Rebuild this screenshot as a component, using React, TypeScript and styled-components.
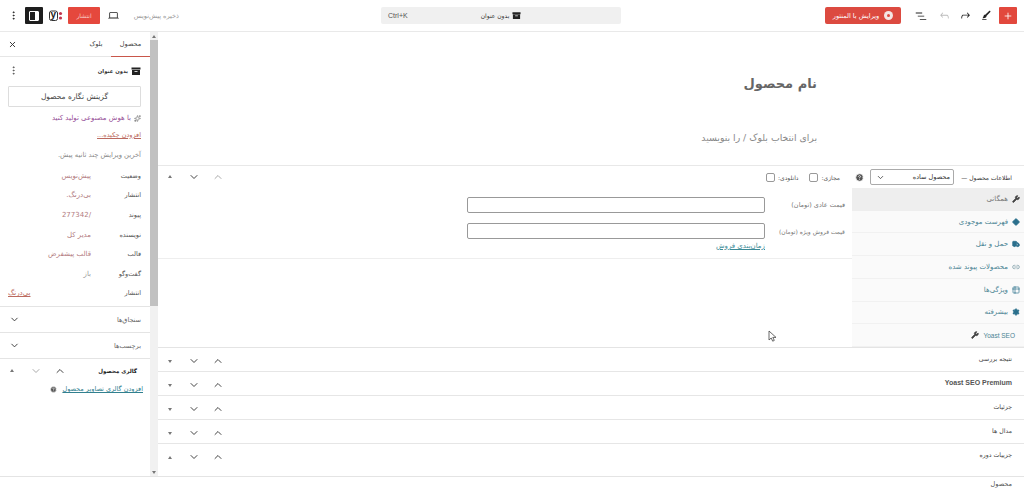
import React from 'react';
import styled, { createGlobalStyle } from 'styled-components';
import { ChevronUp, ChevronDown, X, Plus, MoreVertical, Sparkles, Wrench, Diamond, Truck, Link2, Table2, Settings, HelpCircle } from 'lucide-react';

const Global = createGlobalStyle`
  html, body { margin: 0; padding: 0; background: #fff; }
  * { box-sizing: border-box; }
  body { font-family: "DejaVu Sans", "Noto Sans", sans-serif; }
`;

const Page = styled.div`
  direction: rtl; width: 1024px; height: 490px; overflow: hidden;
  display: flex; flex-direction: column; color: #444; font-size: 7px; position: relative;
`;
const Header = styled.header`
  height: 32px; flex: none; display: grid; grid-template-columns: 403px 240px 1fr;
  align-items: center; border-bottom: 1px solid #e9e9e9;
`;
const HeadGroup = styled.div`
  display: flex; align-items: center; height: 17px;
`;
const RightTools = styled(HeadGroup)`padding-right: 7px;`;
const LeftTools = styled(HeadGroup)`padding-right: 202px;`;
const AddBtn = styled.div`
  width: 18px; height: 17px; background: #e2483d; color: #fff; border-radius: 1px; flex: none;
  display: flex; align-items: center; justify-content: center;
`;
const ToolIcon = styled.div<{ $w: number; $faded?: boolean }>`
  width: ${p => p.$w}px; flex: none; height: 17px; display: flex; align-items: center; justify-content: center;
  color: ${p => (p.$faded ? '#bbb' : '#222')};
`;
const EditBtn = styled.div`
  width: 76px; height: 17px; margin-right: 10px; background: #dc4a40; color: #fff; border-radius: 2px; flex: none;
  display: flex; align-items: center; justify-content: center; gap: 5px; font-size: 6.5px; white-space: nowrap;
`;
const Elementor = styled.span`
  width: 9px; height: 9px; border-radius: 50%; background: #f4e6e4; flex: none;
  display: flex; align-items: center; justify-content: center;
  &::after { content: ''; width: 3px; height: 3px; background: #dc4a40; border-radius: 50%; }
`;
const Command = styled.div`
  height: 17px; background: #f0f0f0; border-radius: 2px; display: flex; align-items: center;
  justify-content: center; gap: 3px; position: relative; font-size: 6px; color: #333;
`;
const Shortcut = styled.span`
  position: absolute; left: 7px; direction: ltr; color: #555; font-family: "Liberation Sans", sans-serif; font-size: 7px;
`;
const Saved = styled.span`color: #999; font-size: 6.5px; width: 52px; flex: none; white-space: nowrap;`;
const Publish = styled.div`
  width: 32px; height: 17px; background: #e5483d; color: #f8c9c3; border-radius: 1px; font-size: 6px; flex: none;
  display: flex; align-items: center; justify-content: center;
`;
const Toggle = styled.div`
  width: 18px; height: 17px; background: #1e1e1e; color: #fff; border-radius: 1px; flex: none;
  display: flex; align-items: center; justify-content: center;
`;
const ToggleGlyph = styled.span`
  width: 10px; height: 10px; border: 1px solid #fff; border-radius: 1px; display: block; position: relative;
  &::after { content: ''; position: absolute; right: 0; top: 0; bottom: 0; width: 3px; background: #fff; }
`;
const Body = styled.div`flex: 1; min-height: 0; display: flex;`;
const Main = styled.main`width: 866px; flex: none; display: flex; flex-direction: column;`;
const Canvas = styled.div`height: 133px; flex: none; display: flex; flex-direction: column; align-items: center;`;
const Title = styled.h1`
  width: 452px; margin: 39px 0 0; font-size: 13px; line-height: 26px; font-weight: 700; color: #666;
`;
const Placeholder = styled.div`
  width: 452px; margin-top: 34px; font-size: 9.3px; line-height: 14px; color: #888;
`;
const ProductHead = styled.div`
  height: 23px; flex: none; border-top: 1px solid #e8e8e8; display: flex; align-items: center; padding-right: 12px;
`;
const ProductTitle = styled.span`font-size: 6px; color: #333; width: 51px; flex: none; white-space: nowrap;`;
const SelectBox = styled.div`
  width: 84px; height: 16px; margin-right: 7px; border: 1px solid #aaa; border-radius: 2px; padding: 0 3px 0 5px; flex: none;
  display: flex; align-items: center; justify-content: space-between; font-size: 6.5px; color: #333;
`;
const Help = styled.span`
  margin-right: 6px; display: flex; color: #555;
`;
const CheckLabel = styled.label<{ $gap: number }>`
  display: flex; align-items: center; gap: 3px; margin-right: ${p => p.$gap}px; color: #555; font-size: 6px; white-space: nowrap;
`;
const Check = styled.input`
  appearance: none; width: 9px; height: 9px; margin: 0; border: 1px solid #999; border-radius: 2px; background: #fff;
`;
const Moves = styled.div`margin-right: auto; display: flex; color: #444;`;
const Move = styled.span<{ $faded?: boolean }>`
  width: 24px; height: 14px; display: flex; align-items: center; justify-content: center;
  color: ${p => (p.$faded ? '#aaa' : '#444')};
`;
const Tri = styled.span<{ $down?: boolean }>`
  width: 0; height: 0; border-left: 2.5px solid transparent; border-right: 2.5px solid transparent;
  ${p => (p.$down ? 'border-top: 3px solid #777;' : 'border-bottom: 3px solid #777;')}
`;
const ProductBody = styled.div`height: 160px; flex: none; display: flex; border-bottom: 1px solid #e4e4e4;`;
const Tabs = styled.div`width: 172px; flex: none; display: flex; flex-direction: column; background: #fafafa;`;
const Tab = styled.div<{ $active?: boolean }>`
  flex: 1; display: flex; align-items: center; gap: 4px; padding-right: 4px; font-size: 7px;
  background: ${p => (p.$active ? '#eee' : 'transparent')};
  color: ${p => (p.$active ? '#777' : '#4a8494')};
  border-bottom: 1px solid ${p => (p.$active ? '#eee' : '#f1f1f1')};
`;
const YoastTab = styled(Tab)`
  color: #4a8494; font-family: "Liberation Sans", sans-serif; font-size: 6.5px; padding-right: 9px;
`;
const TabIcon = styled.span<{ $c?: string }>`display: flex; color: ${p => p.$c || '#2b6f8c'};`;
const Fields = styled.div`flex: 1; display: flex; flex-direction: column;`;
const FieldBlock = styled.div`
  height: 71px; padding: 9px 7px 0 0; display: flex; flex-direction: column; gap: 10px; border-bottom: 1px solid #eee;
`;
const FieldRow = styled.div`display: flex; align-items: center;`;
const FieldLabel = styled.label<{ $small?: boolean }>`
  width: 80px; flex: none; color: #777; font-size: ${p => (p.$small ? 6 : 6.5)}px; white-space: nowrap;
`;
const FieldInput = styled.input`
  width: 298px; height: 16px; border: 1px solid #999; border-radius: 2px; background: #fff; margin: 0; padding: 0;
`;
const Schedule = styled.a`
  margin: -7px 80px 0 0; color: #3b8a96; text-decoration: underline; font-size: 7px;
`;
const Row = styled.div<{ $h?: number }>`
  height: ${p => p.$h || 24}px; flex: none; display: flex; align-items: flex-start; padding: 7px 12px 0 0;
  border-bottom: 1px solid #e6e6e6; color: #444; font-size: 6.2px;
`;
const RowLatin = styled.span`font-family: "Liberation Sans", sans-serif; font-weight: 700; font-size: 7px; color: #555;`;
const RowMoves = styled(Moves)`margin-top: -1px;`;
const Divider = styled.div`flex: none; width: 8px; background: #f1f1f1; display: flex; flex-direction: column; align-items: center;`;
const ScrollEnd = styled.span`height: 8px; flex: none; display: flex; align-items: center;`;
const Thumb = styled.div`width: 8px; height: 266px; background: #c1c1c1; flex: none;`;
const Spacer = styled.div`flex: 1;`;
const Side = styled.aside`width: 150px; flex: none; display: flex; flex-direction: column; font-size: 7px; color: #555;`;
const SideTabs = styled.div`
  height: 25px; flex: none; display: flex; align-items: center; border-bottom: 1px solid #e6e6e6; padding-left: 8px;
`;
const SideTab = styled.div<{ $active?: boolean }>`
  height: 25px; width: ${p => (p.$active ? 39 : 30)}px; display: flex; align-items: center; justify-content: center;
  color: #444; border-bottom: 1px solid ${p => (p.$active ? '#c9564a' : 'transparent')}; margin-bottom: -1px; font-size: 6.5px;
`;
const CloseBtn = styled.span`margin-right: auto; display: flex; color: #333;`;
const PostHead = styled.div`
  height: 29px; flex: none; display: flex; align-items: center; gap: 3px; padding: 0 9px 2px 8px; color: #333; font-size: 5.3px; font-weight: 700;
`;
const DotsEnd = styled.span`margin-right: auto; display: flex; color: #555;`;
const Featured = styled.div`
  height: 21px; flex: none; margin: 0 9px 0 8px; border: 1px solid #ddd; border-radius: 1px;
  display: flex; align-items: center; justify-content: center; color: #444; font-size: 7.5px;
`;
const AiLink = styled.div`
  margin: 4px 9px 0 0; height: 14px; display: flex; align-items: center; gap: 3px; color: #964f97; font-size: 7px;
`;
const AddLink = styled.a`
  margin: 3px 9px 0 0; line-height: 14px; color: #bb6a60; text-decoration: underline; font-size: 6.5px;
`;
const Edited = styled.div`margin: 6px 9px 0 0; line-height: 14px; color: #888; font-size: 6.8px;`;
const Meta = styled.div`
  margin-top: 4px; display: grid; grid-auto-rows: 19.6px; padding: 0 9px 3px 8px;
`;
const MetaRow = styled.div`display: grid; grid-template-columns: 50px 1fr; align-items: center;`;
const MetaLabel = styled.span`color: #555; font-size: 6.5px;`;
const MetaValue = styled.span`color: #b27b80; font-size: 7px; white-space: nowrap;`;
const MetaPlain = styled(MetaValue)`color: #999;`;
const MetaLink = styled.a`
  color: #bb6a60; text-decoration: underline; font-size: 7px; text-align: left; white-space: nowrap;
`;
const SideSection = styled.div`
  height: 26px; flex: none; border-top: 1px solid #e4e4e4; display: flex; align-items: center;
  justify-content: space-between; padding: 0 9px 0 9px; color: #666; font-size: 6.5px;
`;
const Gallery = styled.div`border-top: 1px solid #e4e4e4; flex: none;`;
const GalleryHead = styled.div`
  height: 23px; display: flex; align-items: center; padding-right: 13px; color: #222; font-size: 5.5px; font-weight: 700;
`;
const GalleryLink = styled.div`
  display: flex; align-items: center; gap: 5px; padding-right: 7px; font-size: 6.5px; margin-top: 3px;
`;
const TealLink = styled.a`color: #31808f; text-decoration: underline;`;
const Footer = styled.footer`
  height: 14px; flex: none; border-top: 1px solid #e4e4e4; padding-right: 12px;
  display: flex; align-items: center; color: #555; font-size: 6.5px;
`;
const Pointer = styled.svg`position: absolute; left: 768px; top: 330px;`;

const Undo = ({ size = 13 }: { size?: number }) => (
  <svg width={size} height={size} viewBox="0 0 24 24" fill="currentColor"><path d="M18.3 11.7c-.6-.6-1.4-.9-2.3-.9H6.7l2.9-3.3-1.1-1-4.5 5L8.5 16l1-1-2.7-2.7H16c.5 0 .9.2 1.3.5 1 1 1 3.4 1 4.5v.3h1.5v-.2c0-1.5 0-4.3-1.5-5.7z" /></svg>
);
const Redo = () => (
  <svg width={13} height={13} viewBox="0 0 24 24" fill="currentColor"><path d="M15.6 6.5l-1.1 1 2.9 3.3H8c-.9 0-1.7.3-2.3.9-1.4 1.5-1.4 4.2-1.4 5.6v.2h1.5v-.3c0-1.1 0-3.5 1-4.5.3-.3.7-.5 1.3-.5h9.2L14.5 15l1.1 1.1 4.6-4.6-4.6-5z" /></svg>
);
const ListView = () => (
  <svg width={14} height={14} viewBox="0 0 24 24" fill="currentColor"><path d="M3 6h11v1.5H3V6zm3.5 5.5h11V13h-11v-1.5zM21 17H10v1.5h11V17z" /></svg>
);
const Brush = () => (
  <svg width={13} height={13} viewBox="0 0 24 24" fill="currentColor"><path d="M4 20h8v-1.5H4V20zM18.9 3.5c-.6-.6-1.5-.6-2.1 0l-7.2 7.2c-.4-.1-.7 0-1.1.1-.5.2-1.5.7-1.9 2.2-.4 1.7-.8 2.2-1.1 2.7-.1.1-.2.3-.3.4l-.6 1.1H6c2 0 3.4-.4 4.7-1.4.8-.6 1.2-1.4 1.3-2.3 0-.3 0-.5-.1-.7L19 5.7c.5-.6.5-1.6-.1-2.2z" /></svg>
);
const Laptop = () => (
  <svg width={13} height={13} viewBox="0 0 24 24" fill="currentColor"><path d="M20.5 16h-.7V8c0-1.1-.9-2-2-2H6.2c-1.1 0-2 .9-2 2v8h-.7c-.8 0-1.5.7-1.5 1.5h20c0-.8-.7-1.5-1.5-1.5zM5.7 8c0-.3.2-.5.5-.5h11.6c.3 0 .5.2.5.5v7.6H5.7V8z" /></svg>
);
const ArchiveIcon = ({ size = 10 }: { size?: number }) => (
  <svg width={size} height={size} viewBox="0 0 20 20" fill="#222"><path d="M1 3h18v4H1zM2 8h16v10H2z" /><path d="M7 10h6v1.6H7z" fill="#fff" /></svg>
);
const YoastLogo = () => (
  <svg width={14} height={12} viewBox="0 0 14 12" direction="ltr">
    <rect x="0.5" y="1" width="8" height="9.5" rx="2" fill="none" stroke="#333" strokeWidth="1" />
    <text x="1.4" y="8.4" fontSize="10" fontWeight="700" fontFamily="Liberation Sans" fill="#222" direction="ltr">y</text>
    <circle cx="11.5" cy="3.5" r="1.6" fill="#c2334d" />
    <circle cx="11.5" cy="8" r="1.6" fill="#c2334d" />
  </svg>
);

const MoveSet = ({ down, fadeUp, fadeDown }: { down?: boolean; fadeUp?: boolean; fadeDown?: boolean }) => (
  <>
    <Move $faded={fadeUp}><ChevronUp size={12} strokeWidth={2} /></Move>
    <Move $faded={fadeDown}><ChevronDown size={12} strokeWidth={2} /></Move>
    <Move><Tri $down={down} /></Move>
  </>
);

const metaRows = [
  ['وضعیت', 'پیش‌نویس'],
  ['انتشار', 'بی‌درنگ.'],
  ['پیوند', '/277342'],
  ['نویسنده', 'مدیر کل'],
  ['قالب', 'قالب پیشفرض'],
];

const rows = ['نتیجه بررسی', 'Yoast SEO Premium', 'جزئیات', 'مدال ها'];

export default function App() {
  return (
    <Page>
      <Global />
      <Header>
        <RightTools>
          <AddBtn><Plus size={10} strokeWidth={2} /></AddBtn>
          <ToolIcon $w={26}><Brush /></ToolIcon>
          <ToolIcon $w={16}><Redo /></ToolIcon>
          <ToolIcon $w={26} $faded><Undo /></ToolIcon>
          <ToolIcon $w={20}><ListView /></ToolIcon>
          <EditBtn><Elementor />ویرایش با المنتور</EditBtn>
        </RightTools>
        <Command>
          <ArchiveIcon size={9} />
          <span>بدون عنوان</span>
          <Shortcut>Ctrl+K</Shortcut>
        </Command>
        <LeftTools>
          <Saved>ذخیره پیش‌نویس</Saved>
          <ToolIcon $w={27}><Laptop /></ToolIcon>
          <Publish>انتشار</Publish>
          <ToolIcon $w={25}><YoastLogo /></ToolIcon>
          <Toggle><ToggleGlyph /></Toggle>
          <ToolIcon $w={24}><MoreVertical size={11} /></ToolIcon>
        </LeftTools>
      </Header>
      <Body>
        <Main>
          <Canvas>
            <Title>نام محصول</Title>
            <Placeholder>برای انتخاب بلوک / را بنویسید</Placeholder>
          </Canvas>
          <ProductHead>
            <ProductTitle>اطلاعات محصول —</ProductTitle>
            <SelectBox><span>محصول ساده</span><ChevronDown size={9} /></SelectBox>
            <Help><HelpCircle size={9} fill="#555" stroke="#fff" /></Help>
            <CheckLabel $gap={15}>مجازی:<Check type="checkbox" /></CheckLabel>
            <CheckLabel $gap={11}>دانلودی:<Check type="checkbox" /></CheckLabel>
            <RowMoves><MoveSet fadeUp /></RowMoves>
          </ProductHead>
          <ProductBody>
            <Tabs>
              <Tab $active><TabIcon $c="#444"><Wrench size={8} fill="currentColor" /></TabIcon>همگانی</Tab>
              <Tab><TabIcon><Diamond size={8} fill="currentColor" /></TabIcon>فهرست موجودی</Tab>
              <Tab><TabIcon><Truck size={8} fill="currentColor" /></TabIcon>حمل و نقل</Tab>
              <Tab><TabIcon $c="#6b8f9b"><Link2 size={8} /></TabIcon>محصولات پیوند شده</Tab>
              <Tab><TabIcon><Table2 size={8} /></TabIcon>ویژگی‌ها</Tab>
              <Tab><TabIcon><Settings size={8} fill="currentColor" /></TabIcon>بیشرفته</Tab>
              <YoastTab>Yoast SEO<TabIcon $c="#444"><Wrench size={8} fill="currentColor" /></TabIcon></YoastTab>
            </Tabs>
            <Fields>
              <FieldBlock>
                <FieldRow><FieldLabel>قیمت عادی (تومان)</FieldLabel><FieldInput /></FieldRow>
                <FieldRow><FieldLabel $small>قیمت فروش ویژه (تومان)</FieldLabel><FieldInput /></FieldRow>
                <Schedule>زمان‌بندی فروش</Schedule>
              </FieldBlock>
            </Fields>
          </ProductBody>
          {rows.map(r => (
            <Row key={r}>
              {r.startsWith('Yoast') ? <RowLatin>{r}</RowLatin> : <span>{r}</span>}
              <RowMoves><MoveSet down /></RowMoves>
            </Row>
          ))}
          <Row $h={33}>
            <span>جزییات دوره</span>
            <RowMoves><MoveSet /></RowMoves>
          </Row>
        </Main>
        <Divider>
          <ScrollEnd><Tri /></ScrollEnd>
          <Thumb />
          <Spacer />
          <ScrollEnd><Tri $down /></ScrollEnd>
        </Divider>
        <Side>
          <SideTabs>
            <SideTab $active>محصول</SideTab>
            <SideTab>بلوک</SideTab>
            <CloseBtn><X size={9} strokeWidth={2.5} /></CloseBtn>
          </SideTabs>
          <PostHead>
            <ArchiveIcon />
            <span>بدون عنوان</span>
            <DotsEnd><MoreVertical size={11} /></DotsEnd>
          </PostHead>
          <Featured>گزینش نگاره محصول</Featured>
          <AiLink><Sparkles size={7} color="#666" />با هوش مصنوعی تولید کنید</AiLink>
          <AddLink>افزودن چکیده...</AddLink>
          <Edited>آخرین ویرایش چند ثانیه پیش.</Edited>
          <Meta>
            {metaRows.map(([k, v]) => (
              <MetaRow key={k}><MetaLabel>{k}</MetaLabel><MetaValue>{v}</MetaValue></MetaRow>
            ))}
            <MetaRow><MetaLabel>گفت‌وگو</MetaLabel><MetaPlain>باز</MetaPlain></MetaRow>
            <MetaRow><MetaLabel>انتشار</MetaLabel><MetaLink>بی‌درنگ</MetaLink></MetaRow>
          </Meta>
          <SideSection><span>سنجاق‌ها</span><ChevronDown size={11} color="#333" /></SideSection>
          <SideSection><span>برچسب‌ها</span><ChevronDown size={11} color="#333" /></SideSection>
          <Gallery>
            <GalleryHead>
              <span>گالری محصول</span>
              <Moves><MoveSet fadeDown /></Moves>
            </GalleryHead>
            <GalleryLink>
              <TealLink>افزودن گالری تصاویر محصول</TealLink>
              <HelpCircle size={7} fill="#555" stroke="#fff" />
            </GalleryLink>
          </Gallery>
        </Side>
      </Body>
      <Footer>محصول</Footer>
      <Pointer width="9" height="12" viewBox="0 0 9 12">
        <path d="M1 1v9l2.2-2 1.5 3.2 1.6-.8-1.5-3H8z" fill="#fff" stroke="#444" strokeWidth=".8" />
      </Pointer>
    </Page>
  );
}
